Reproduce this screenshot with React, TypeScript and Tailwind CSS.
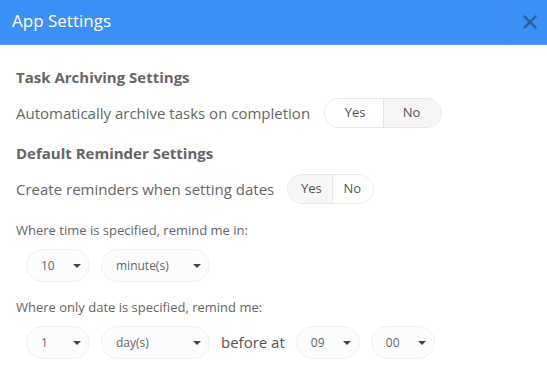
import React, { useState } from 'react';

// Small pill toggle with two segments
const YesNo = ({ value, onChange, wide }: { value: boolean; onChange: (v: boolean) => void; wide?: boolean }) => {
  const yes = wide ? 'w-[59px]' : 'w-[45px]';
  const no = wide ? 'w-[57px]' : 'w-[40px]';
  return (
    <div className="flex h-[30px] rounded-full border border-[#e6e6e6] overflow-hidden text-[13px] text-[#555]">
      <button
        className={`${yes} pl-[2px] ${value ? 'bg-[#f6f6f6]' : 'bg-white'} border-r border-[#e6e6e6]`}
        onClick={() => onChange(true)}
      >
        Yes
      </button>
      <button
        className={`${no} pr-[2px] ${!value ? 'bg-[#f6f6f6]' : 'bg-white'}`}
        onClick={() => onChange(false)}
      >
        No
      </button>
    </div>
  );
};

const Select = ({ value, width }: { value: string; width: string }) => (
  <div
    className={`${width} h-[33px] flex items-center justify-between pl-[14px] pr-[8px] rounded-full border border-[#eef0f2] bg-[#fbfcfd] text-[12px] text-[#666]`}
  >
    <span>{value}</span>
    <svg width="8" height="4" viewBox="0 0 8 4">
      <path d="M0 0 L8 0 L4 4 Z" fill="#444" />
    </svg>
  </div>
);

export default function App() {
  const [archive, setArchive] = useState(false);
  const [reminders, setReminders] = useState(true);

  return (
    <div className="w-[547px] h-[392px] bg-white font-['Open_Sans',sans-serif] text-[#666]">
      {/* Header */}
      <div className="flex h-[45px] bg-[#3c8ff5] border-b border-[#5aa0f7]">
        <div className="flex-1 pl-3 flex items-center text-[17px] text-white pb-[2px]">App Settings</div>
        <button className="w-[41px] flex items-center justify-center pl-[6px] border-l border-[#3a89ee]">
          <svg width="14" height="14" viewBox="0 0 14 14">
            <path d="M1.5 1.5 L12.5 12.5 M12.5 1.5 L1.5 12.5" stroke="#2c5d96" strokeWidth="2.4" strokeLinecap="round" />
          </svg>
        </button>
      </div>

      {/* Body */}
      <div className="px-4 pt-[20px]">
        <div className="text-[15px] font-bold leading-[24px]">Task Archiving Settings</div>

        <div className="flex items-center gap-[14px] mt-[9px]">
          <span className="text-[15px]">Automatically archive tasks on completion</span>
          <YesNo value={archive} onChange={setArchive} wide />
        </div>

        <div className="text-[15px] font-bold leading-[24px] mt-[13px]">Default Reminder Settings</div>

        <div className="flex items-center gap-[13px] mt-[9px]">
          <span className="text-[15px]">Create reminders when setting dates</span>
          <YesNo value={reminders} onChange={setReminders} />
        </div>

        <div className="text-[13px] leading-[20px] mt-[16px]">Where time is specified, remind me in:</div>
        <div className="flex items-center gap-[11px] pl-[10px] mt-[9px]">
          <Select value="10" width="w-[64px]" />
          <Select value="minute(s)" width="w-[109px]" />
        </div>

        <div className="text-[13px] leading-[20px] mt-[15px]">Where only date is specified, remind me:</div>
        <div className="flex items-center gap-[11px] pl-[10px] mt-[9px]">
          <Select value="1" width="w-[64px]" />
          <Select value="day(s)" width="w-[109px]" />
          <span className="text-[15px] text-[#555]">before at</span>
          <Select value="09" width="w-[64px]" />
          <Select value="00" width="w-[64px]" />
        </div>
      </div>
    </div>
  );
}
